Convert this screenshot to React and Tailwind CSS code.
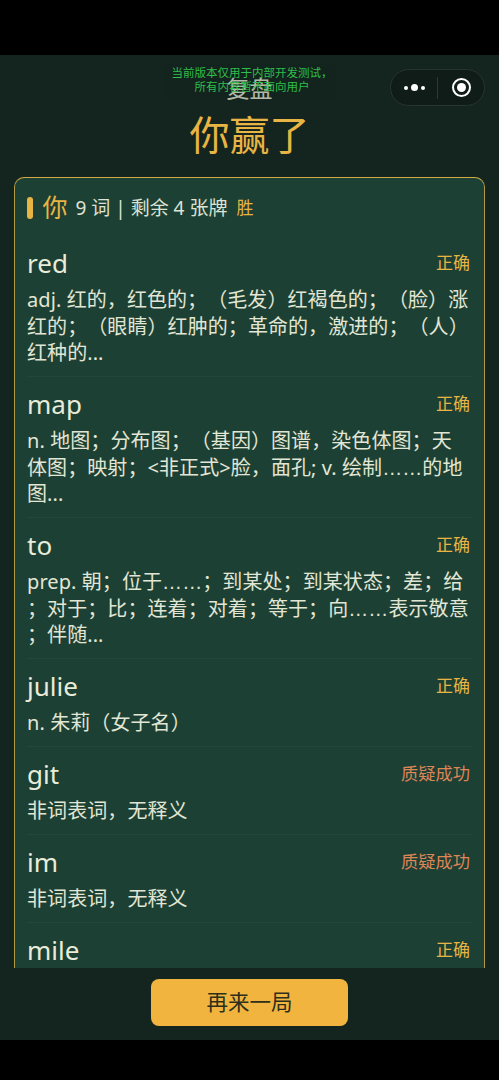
import React from "react";

const cjk = "font-['Noto_Sans','Noto_Sans_CJK_SC',sans-serif] [text-spacing-trim:space-all]";

const words = [
  {
    word: "red",
    status: "正确",
    lines: ["adj. 红的，红色的；（毛发）红褐色的；（脸）涨", "红的；（眼睛）红肿的；革命的，激进的；（人）", "红种的..."],
  },
  {
    word: "map",
    status: "正确",
    lines: ["n. 地图；分布图；（基因）图谱，染色体图；天", "体图；映射；<非正式>脸，面孔; v. 绘制……的地", "图..."],
  },
  {
    word: "to",
    status: "正确",
    lines: ["prep. 朝；位于……；到某处；到某状态；差；给", "；对于；比；连着；对着；等于；向……表示敬意", "；伴随..."],
  },
  { word: "julie", status: "正确", lines: ["n. 朱莉（女子名）"] },
  { word: "git", status: "质疑成功", lines: ["非词表词，无释义"] },
  { word: "im", status: "质疑成功", lines: ["非词表词，无释义"] },
  { word: "mile", status: "正确", lines: [] },
];

// the ellipsis sits on the baseline and is a full em wide per glyph
function Line({ text }) {
  const parts = text.split("……");
  return (
    <div>
      {parts.map((part, i) => (
        <React.Fragment key={i}>
          {i > 0 && <span className="font-['Liberation_Sans',sans-serif]">……</span>}
          {part}
        </React.Fragment>
      ))}
    </div>
  );
}

function WordRow({ item, last }) {
  const challenged = item.status !== "正确";
  return (
    <div className={`${last ? "" : "border-b border-[#25463b]"} pt-[11px] pb-[9.5px]`}>
      <div className="flex items-center justify-between h-[32px]">
        <span className="text-[26px] leading-[32px] text-[#e8ecd8]">{item.word}</span>
        <span className={`pr-[2px] ${challenged ? "text-[17.25px] text-[#dc8557]" : "text-[17px] text-[#e8b544]"}`}>{item.status}</span>
      </div>
      <div className="mt-[8px] text-[20px] leading-[26.5px] tracking-[0.08px] text-[#e2e6d4] whitespace-nowrap">
        {item.lines.map((line) => (
          <Line key={line} text={line} />
        ))}
      </div>
    </div>
  );
}

export default function App() {
  return (
    <div className={`${cjk} w-[499px] h-[1080px] bg-black flex flex-col overflow-hidden`}>
      <div className="h-[55px] shrink-0" />

      <div className="relative h-[985px] bg-[#14251f] flex flex-col">
        {/* dev notice over the nav title */}
        <div className="absolute left-[164px] top-[8px] w-[172px] h-[36px] bg-[#111f1a]/25 text-center text-[#2fbf4a] text-[11.5px] leading-[14px] pt-[3px] pl-[4px]">
          当前版本仅用于内部开发测试，
          <br />
          所有内容暂不面向用户
        </div>

        {/* wechat capsule */}
        <div className="absolute left-[390px] top-[14px] w-[95px] h-[37px] rounded-full bg-[#101c18] border border-[#27352f] flex items-center">
          <div className="w-[46px] flex items-center justify-center gap-[3px]">
            <span className="w-[4px] h-[4px] rounded-full bg-white" />
            <span className="w-[7px] h-[7px] rounded-full bg-white" />
            <span className="w-[4px] h-[4px] rounded-full bg-white" />
          </div>
          <div className="w-px h-[22px] bg-[#2b3a34]" />
          <div className="flex-1 flex items-center justify-center">
            <div className="w-[19px] h-[19px] rounded-full border-[2px] border-white flex items-center justify-center">
              <span className="w-[9px] h-[9px] rounded-full bg-white" />
            </div>
          </div>
        </div>

        <div className="h-[52px] shrink-0 flex items-center justify-center pt-[14px] text-[23px] text-[#e8ecd8]">复盘</div>
        <div className="h-[56px] shrink-0 flex items-center justify-center text-[40px] leading-[56px] text-[#e8b544]">你赢了</div>

        <div className="mt-[14px] mx-[14px] h-[791px] shrink-0 rounded-t-[10px] border border-b-0 border-[#b09a45] border-t-[#d2ab45] bg-[#1d4035] overflow-hidden px-[12px]">
          <div className="flex items-center h-[58px] pt-[2px]">
            <span className="w-[5.5px] h-[22px] rounded-full bg-[#e8b544]" />
            <span className="ml-[10px] text-[25px] text-[#e8b544]">你</span>
            <span className="ml-[8px] text-[19px] text-[#dfe3d2]">9 词 | 剩余 4 张牌</span>
            <span className="ml-[9px] text-[17px] text-[#e8b544]">胜</span>
          </div>
          {words.map((item, i) => (
            <WordRow key={item.word} item={item} last={i === words.length - 1} />
          ))}
        </div>

        <div className="flex-1 flex items-start justify-center pt-[11px]">
          <button className="w-[197px] h-[47px] rounded-[8px] bg-[#f1b53f] text-[21.5px] text-[#2c2f1c]">再来一局</button>
        </div>
      </div>
    </div>
  );
}
